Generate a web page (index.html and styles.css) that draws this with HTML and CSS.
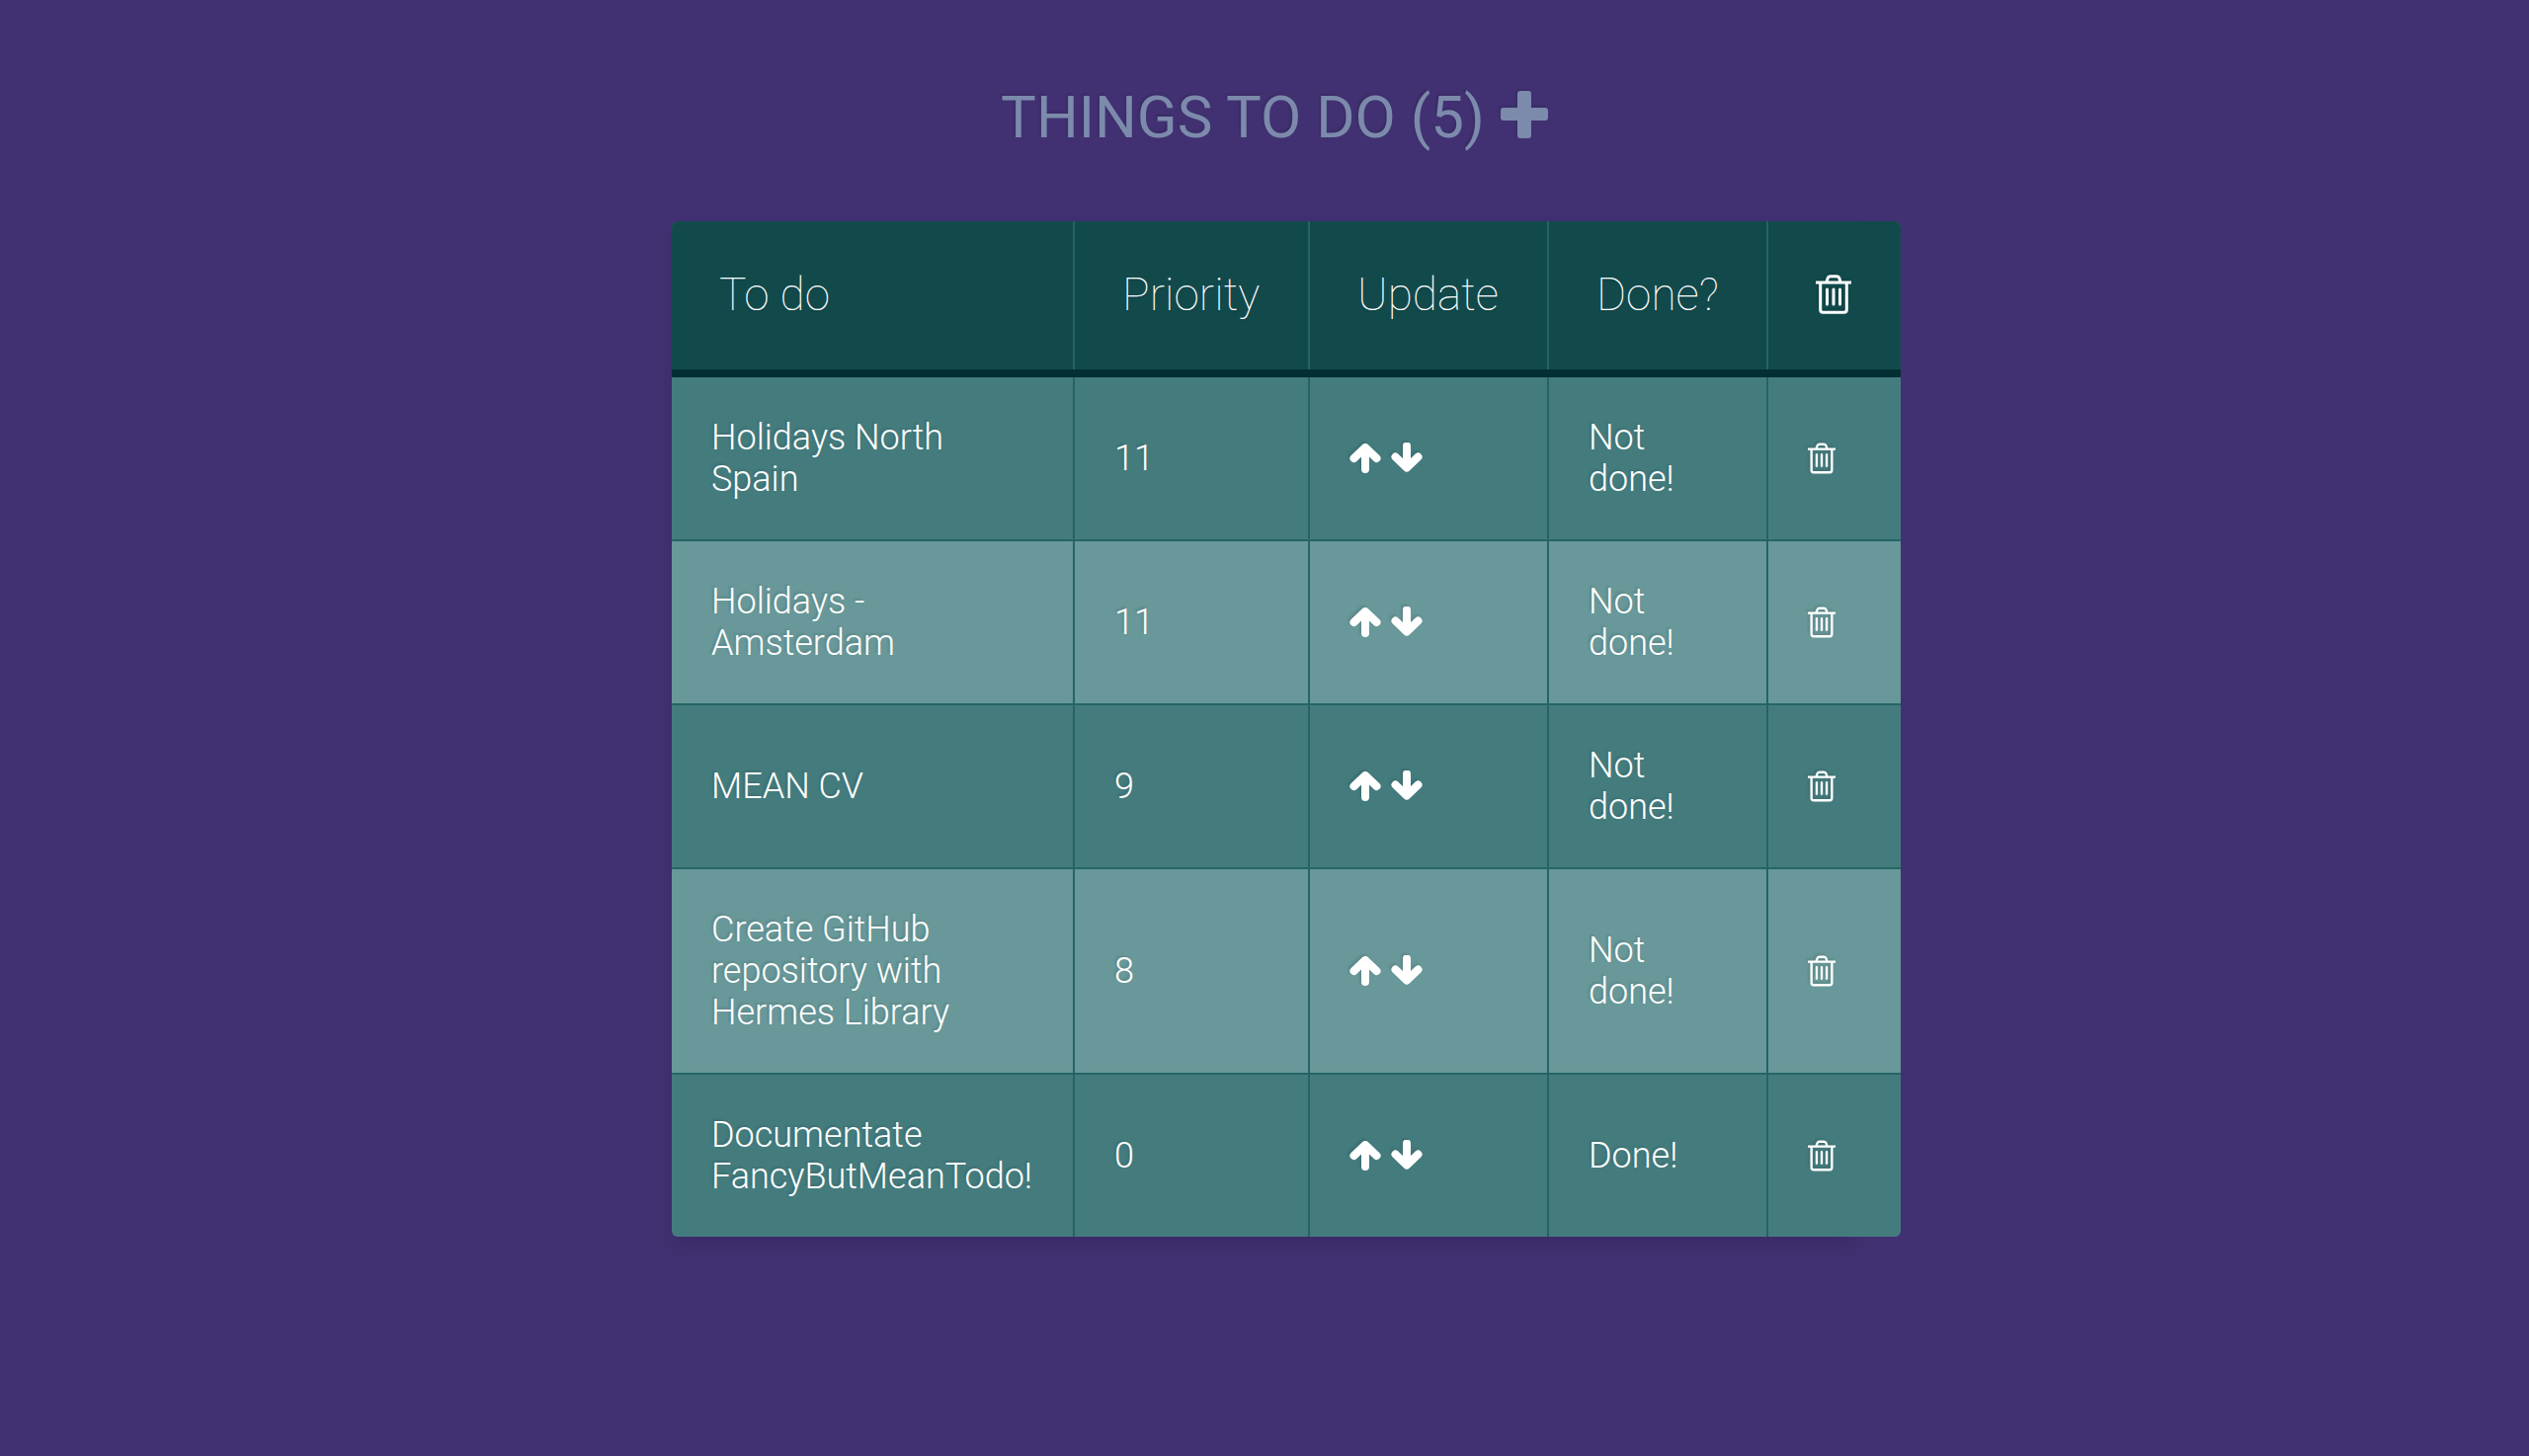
FILE: index.html
```html
<!DOCTYPE html>
<html lang="en">
<head>
<meta charset="utf-8">
<meta name="viewport" content="width=device-width, initial-scale=1">
<title>Things to do</title>
<link rel="stylesheet" href="styles.css">
</head>
<body>
<svg class="sprite" aria-hidden="true">
  <symbol id="plus" viewBox="0 0 48 48">
    <rect x="17" y="0" width="14" height="48" rx="3"/>
    <rect x="0" y="17" width="48" height="13" rx="3"/>
  </symbol>
  <symbol id="up" viewBox="0 0 32 32">
    <path d="M4.500 16 16 5l11.500 11M16 6v21" fill="none" stroke="currentColor" stroke-width="8" stroke-linecap="round" stroke-linejoin="round"/>
  </symbol>
  <symbol id="down" viewBox="0 0 32 32">
    <path d="M4.500 14.500 16 25.500l11.500-11M16 24.500V3.500" fill="none" stroke="currentColor" stroke-width="8" stroke-linecap="round" stroke-linejoin="round"/>
  </symbol>
  <symbol id="trash" viewBox="0 0 36 40">
    <path d="M0 8H36M11 7.500 12 4Q12.800 1.700 15 1.700H21Q23.200 1.700 24 4L25 7.500M4.700 8V35.500Q4.700 38.300 7.500 38.300H28.500Q31.300 38.300 31.300 35.500V8" fill="none" stroke="currentColor" stroke-width="3"/>
    <path d="M11.500 15V30M18 15V30M24.500 15V30" fill="none" stroke="currentColor" stroke-width="3" stroke-linecap="round"/>
  </symbol>
</svg>
<main class="page">
  <header class="title">
    <h1>Things to do (5)</h1>
    <button class="icon-button" type="button" aria-label="Add"><svg class="icon-add"><use href="#plus"/></svg></button>
  </header>
  <div class="table-box">
    <table class="todos">
      <colgroup><col class="col-name"><col class="col-priority"><col class="col-update"><col class="col-done"><col class="col-remove"></colgroup>
      <thead>
        <tr><th>To do</th><th>Priority</th><th>Update</th><th>Done?</th><th aria-label="Remove"><svg class="icon-trash-large"><use href="#trash"/></svg></th></tr>
      </thead>
      <tbody>
        <tr>
          <td>Holidays North Spain</td><td>11</td>
          <td><div class="arrows"><button class="icon-button" type="button" aria-label="Raise priority"><svg class="icon-arrow"><use href="#up"/></svg></button><button class="icon-button" type="button" aria-label="Lower priority"><svg class="icon-arrow"><use href="#down"/></svg></button></div></td>
          <td>Not done!</td>
          <td><button class="icon-button" type="button" aria-label="Remove"><svg class="icon-trash"><use href="#trash"/></svg></button></td>
        </tr>
        <tr>
          <td>Holidays - Amsterdam</td><td>11</td>
          <td><div class="arrows"><button class="icon-button" type="button" aria-label="Raise priority"><svg class="icon-arrow"><use href="#up"/></svg></button><button class="icon-button" type="button" aria-label="Lower priority"><svg class="icon-arrow"><use href="#down"/></svg></button></div></td>
          <td>Not done!</td>
          <td><button class="icon-button" type="button" aria-label="Remove"><svg class="icon-trash"><use href="#trash"/></svg></button></td>
        </tr>
        <tr>
          <td>MEAN CV</td><td>9</td>
          <td><div class="arrows"><button class="icon-button" type="button" aria-label="Raise priority"><svg class="icon-arrow"><use href="#up"/></svg></button><button class="icon-button" type="button" aria-label="Lower priority"><svg class="icon-arrow"><use href="#down"/></svg></button></div></td>
          <td>Not done!</td>
          <td><button class="icon-button" type="button" aria-label="Remove"><svg class="icon-trash"><use href="#trash"/></svg></button></td>
        </tr>
        <tr>
          <td>Create GitHub repository with Hermes Library</td><td>8</td>
          <td><div class="arrows"><button class="icon-button" type="button" aria-label="Raise priority"><svg class="icon-arrow"><use href="#up"/></svg></button><button class="icon-button" type="button" aria-label="Lower priority"><svg class="icon-arrow"><use href="#down"/></svg></button></div></td>
          <td>Not done!</td>
          <td><button class="icon-button" type="button" aria-label="Remove"><svg class="icon-trash"><use href="#trash"/></svg></button></td>
        </tr>
        <tr>
          <td>Documentate FancyButMeanTodo!</td><td>0</td>
          <td><div class="arrows"><button class="icon-button" type="button" aria-label="Raise priority"><svg class="icon-arrow"><use href="#up"/></svg></button><button class="icon-button" type="button" aria-label="Lower priority"><svg class="icon-arrow"><use href="#down"/></svg></button></div></td>
          <td>Done!</td>
          <td><button class="icon-button" type="button" aria-label="Remove"><svg class="icon-trash"><use href="#trash"/></svg></button></td>
        </tr>
      </tbody>
    </table>
  </div>
</main>
</body>
</html>
```
FILE: styles.css
```css
* {
  box-sizing: border-box;
}

body {
  margin: 0;
  min-height: 100vh;
  background: #413172;
  font-family: Roboto, "Liberation Sans", sans-serif;
}

.sprite {
  display: none;
}

.page {
  max-width: 1200px;
  margin: 0 auto;
  padding: 84px 0;
}

.title {
  display: flex;
  justify-content: center;
  align-items: flex-start;
  gap: 16px;
  padding-left: 20px;
  margin-bottom: 70px;
  color: #7c8aac;
}

.title h1 {
  margin: 0;
  font-size: 60px;
  line-height: 70px;
  font-weight: 400;
  text-transform: uppercase;
  text-shadow: -2px -2px 2px rgba(0, 0, 0, 0.1);
}

.icon-button {
  display: block;
  margin: 0;
  padding: 0;
  border: 0;
  background: none;
  color: inherit;
  cursor: pointer;
}

.title .icon-button {
  padding-top: 8px;
}

.icon-button svg,
.todos svg {
  display: block;
  fill: currentColor;
  filter: drop-shadow(-2px -2px 1px rgba(0, 0, 0, 0.1));
}

.icon-add {
  width: 48px;
  height: 48px;
}

.icon-arrow {
  width: 32px;
  height: 32px;
}

.icon-trash {
  width: 28px;
  height: 32px;
}

.icon-trash-large {
  width: 36px;
  height: 40px;
}

.arrows {
  display: flex;
  gap: 10px;
}

.table-box {
  border-radius: 6px;
  box-shadow: 0 10px 20px rgba(0, 0, 0, 0.1);
}

.todos {
  min-width: 1244px;
  table-layout: fixed;
  border-collapse: separate;
  border-spacing: 0;
  border-radius: 6px;
  overflow: hidden;
  text-align: left;
  background: #447c7e;
}

.col-name { width: 408px; }
.col-priority { width: 238px; }
.col-update { width: 242px; }
.col-done { width: 222px; }
.col-remove { width: 134px; }

/* The divider is an inset shadow, so the thick bottom rule runs unbroken. */
.todos th {
  padding: 46px 48px 48px;
  border-bottom: 8px solid #032f33;
  background: #124a4c;
  color: #fff;
  font-size: 46px;
  line-height: 56px;
  font-weight: 100;
  white-space: nowrap;
  text-shadow: 0 2px 2px rgba(0, 0, 0, 0.1);
  box-shadow: inset -2px 0 #256466;
}

.todos td {
  padding: 40px;
  border-right: 2px solid #256466;
  border-bottom: 2px solid #256466;
  color: #fff;
  font-size: 36px;
  line-height: 42px;
  font-weight: 300;
  vertical-align: middle;
  text-shadow: -2px -2px 2px rgba(0, 0, 0, 0.1);
}

.todos tbody tr:nth-child(even) {
  background: #689899;
}

.todos th:last-child {
  box-shadow: none;
}

.todos td:last-child {
  border-right: 0;
}

.todos tbody tr:last-child td {
  border-bottom: 0;
}
```
